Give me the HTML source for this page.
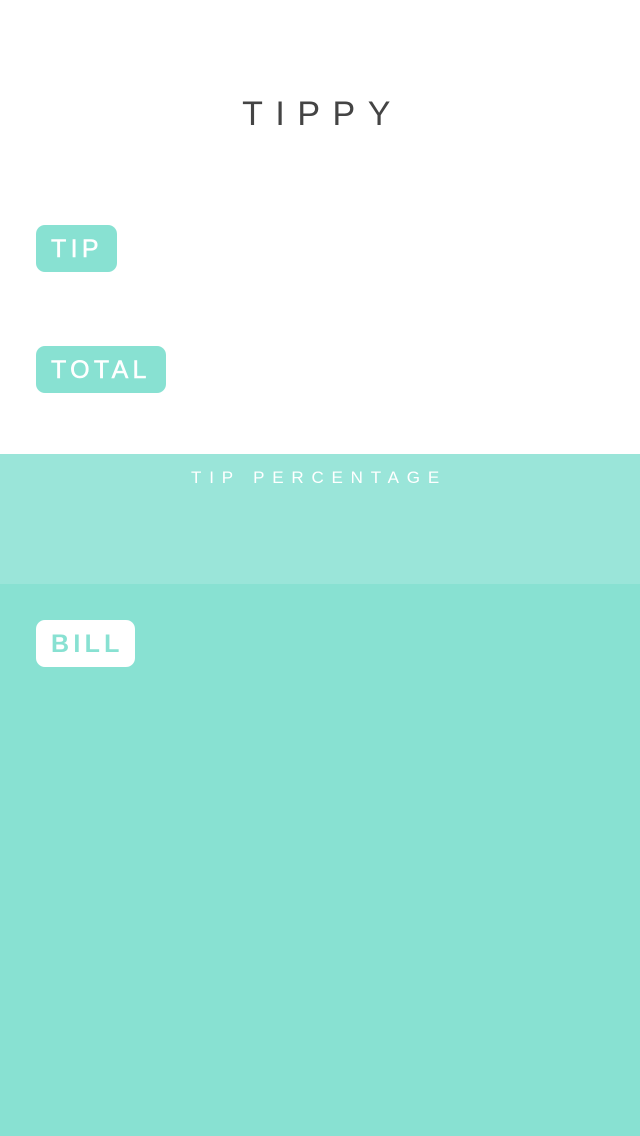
<!DOCTYPE html>
<html><head><style>
body{margin:0;width:640px;height:1136px;background:#fff;font-family:"Liberation Sans",sans-serif;position:relative;overflow:hidden}
.title{position:absolute;top:95px;left:0;width:640px;text-align:center;font-size:34px;color:#444;letter-spacing:12.5px;text-indent:5px;font-weight:normal}
.lbl{position:absolute;left:36px;height:47px;line-height:48px;border-radius:9px;font-size:25px;letter-spacing:4.3px;padding:0 0 0 15px;box-sizing:border-box;font-weight:normal;-webkit-text-stroke:0.5px currentColor}
.g{background:#88e1d2;color:#fff}
.w{background:#fff;color:#88e1d2;font-weight:bold;-webkit-text-stroke:0}
.band{position:absolute;left:0;top:454px;width:640px;height:130px;background:#9ae5d9}
.bot{position:absolute;left:0;top:584px;width:640px;height:552px;background:#88e1d2}
.pct{position:absolute;top:468px;left:0;width:640px;text-align:center;color:#fff;font-size:17px;letter-spacing:7.8px;text-indent:-2px}
</style></head><body>
<div class="title">TIPPY</div>
<div class="lbl g" style="top:225px;width:81px">TIP</div>
<div class="lbl g" style="top:346px;width:130px">TOTAL</div>
<div class="band"></div>
<div class="pct">TIP PERCENTAGE</div>
<div class="bot"></div>
<div class="lbl w" style="top:620px;width:99px">BILL</div>
</body></html>
